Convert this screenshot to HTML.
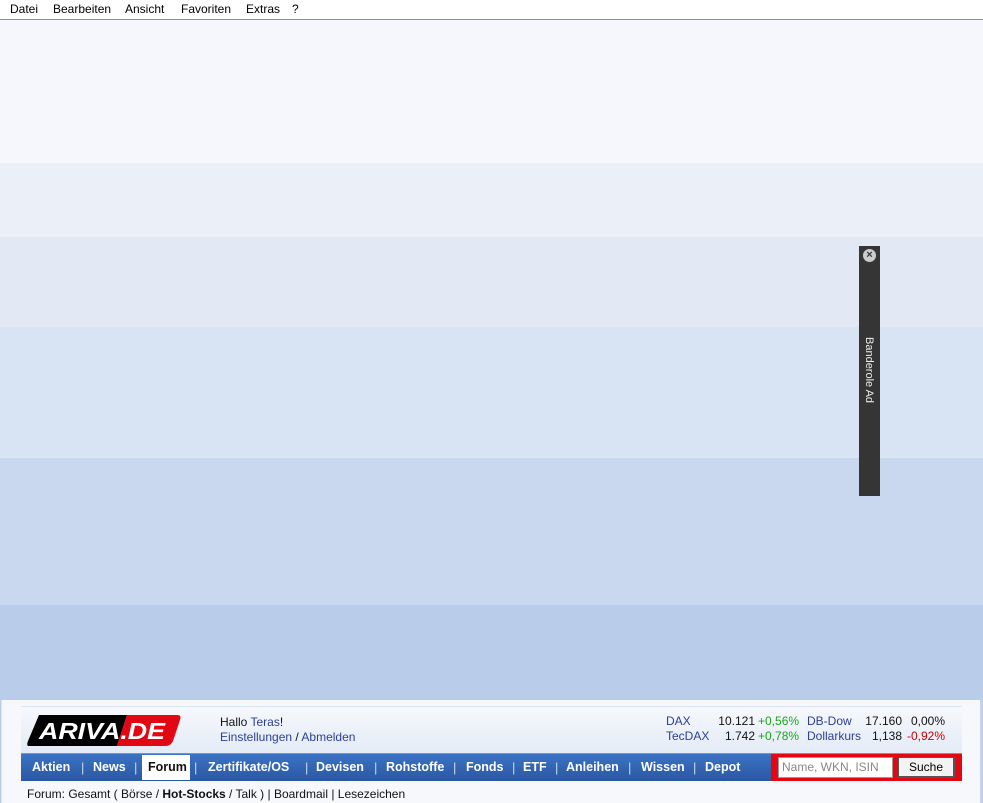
<!DOCTYPE html><html><head><style>
body{margin:0;width:983px;height:803px;overflow:hidden;font-family:"Liberation Sans",sans-serif;background:#f6f8fc;position:relative}
.menu{height:19px;border-bottom:1px solid #8a8f99;background:#fff;font-size:12px;line-height:18px;position:relative}
.menu span{position:absolute;top:0;color:#000}
.b{position:absolute;left:0;width:983px}
.ad{position:absolute;left:859px;top:246px;width:21px;height:250px;background:#353535}
.ad .x{position:absolute;left:4px;top:3px;width:13px;height:13px;border-radius:50%;background:#ccc;color:#353535;font-size:11px;line-height:13px;text-align:center;font-weight:bold}
.ad .t{position:absolute;left:16px;top:91px;transform:rotate(90deg);transform-origin:0 0;color:#eee;font-size:11px;white-space:nowrap}
.cont{position:absolute;left:1px;top:700px;width:978px;height:103px;background:#f6f8fc;border-left:1px solid #dde6f3;border-right:2px solid #c6d5ec}
.hdr{position:absolute;left:19px;top:6px;width:941px;height:47px;border-top:1px solid #dbe4f2;background:linear-gradient(#f6f8fc,#e3ebf6)}
.nav{position:absolute;left:19px;top:53px;width:941px;height:27px;background:linear-gradient(#3b73c4,#2b58a3);border-top:1px solid #6c95d3}
.nav a{position:absolute;top:0;color:#fff;font-weight:bold;font-size:12.5px;line-height:27px}
.sep{position:absolute;top:0;color:#c9d7ee;font-size:13px;line-height:27px}
a{text-decoration:none}
.tk{position:absolute;font-size:12px;line-height:15px;white-space:nowrap}
.r{text-align:right}
</style></head><body>
<div class="menu"><span style="left:10px">Datei</span><span style="left:53px">Bearbeiten</span><span style="left:125px">Ansicht</span><span style="left:181px">Favoriten</span><span style="left:246px">Extras</span><span style="left:292px">?</span></div>
<div class="b" style="top:20px;height:143px;background:#f5f7fc"></div>
<div class="b" style="top:163px;height:74px;background:#ebf0f8"></div>
<div class="b" style="top:237px;height:90px;background:#e2e9f5"></div>
<div class="b" style="top:327px;height:131px;background:#d8e3f4"></div>
<div class="b" style="top:458px;height:147px;background:#c9d8ef"></div>
<div class="b" style="top:605px;height:198px;background:#b9cdea"></div>
<div class="ad"><div class="x">×</div><div class="t">Banderole Ad</div></div>
<div class="cont">
<div class="hdr">
<svg style="position:absolute;left:6px;top:8px" width="154" height="31"><path d="M12 0H100L90 31H2Q-1 31 1 26Z" fill="#000"/><path d="M100 0H150Q155 0 153 5L146 26Q144 31 138 31H90Z" fill="#e30613"/><text x="12" y="24" font-family="Liberation Sans" font-style="italic" font-weight="bold" font-size="23" fill="#fff" textLength="126" lengthAdjust="spacingAndGlyphs">ARIVA.DE</text></svg>
<div style="position:absolute;left:199px;top:8px;font-size:12px;line-height:15px;color:#111">Hallo <span style="color:#2a3f99">Teras</span>!<br><span style="color:#2a3f99">Einstellungen</span> / <span style="color:#2a3f99">Abmelden</span></div>
</div>
<div class="tk" style="left:664px;top:14px;color:#2a3f99">DAX<br>TecDAX</div>
<div class="tk r" style="left:700px;top:14px;width:53px;color:#111">10.121<br>1.742</div>
<div class="tk" style="left:756px;top:14px;color:#1aa51a">+0,56%<br>+0,78%</div>
<div class="tk" style="left:805px;top:14px;color:#2a3f99">DB-Dow<br>Dollarkurs</div>
<div class="tk r" style="left:850px;top:14px;width:50px;color:#111">17.160<br>1,138</div>
<div class="tk r" style="left:900px;top:14px;width:43px;color:#111">0,00%<br><span style="color:#c00">-0,92%</span></div>
<div class="nav">
<a style="left:11px">Aktien</a><span class="sep" style="left:60px">|</span>
<a style="left:72px">News</a><span class="sep" style="left:113px">|</span>
<div style="position:absolute;left:121px;top:1px;width:48px;height:25px;background:#fff"></div><a style="left:127px;color:#111">Forum</a><span class="sep" style="left:173px">|</span>
<a style="left:187px">Zertifikate/OS</a><span class="sep" style="left:284px">|</span>
<a style="left:295px">Devisen</a><span class="sep" style="left:353px">|</span>
<a style="left:365px">Rohstoffe</a><span class="sep" style="left:432px">|</span>
<a style="left:445px">Fonds</a><span class="sep" style="left:491px">|</span>
<a style="left:502px">ETF</a><span class="sep" style="left:534px">|</span>
<a style="left:545px">Anleihen</a><span class="sep" style="left:607px">|</span>
<a style="left:620px">Wissen</a><span class="sep" style="left:672px">|</span>
<a style="left:684px">Depot</a>
<div style="position:absolute;left:750px;top:0;width:191px;height:27px;background:#e30613">
<div style="position:absolute;left:7px;top:3px;width:115px;height:21px;background:#fff;border:1px solid #999;box-sizing:border-box;color:#888;font-size:12px;line-height:19px;padding-left:3px">Name, WKN, ISIN</div>
<div style="position:absolute;left:127px;top:3px;width:57px;height:21px;background:#f3f3f3;border:1px solid #555;border-right-width:2px;border-bottom-width:2px;box-sizing:border-box;font-size:12px;line-height:18px;text-align:center;color:#000">Suche</div>
</div>
</div>
<div style="position:absolute;left:25px;top:87px;font-size:12px;color:#111">Forum: Gesamt ( Börse / <b>Hot-Stocks</b> / Talk ) | Boardmail | Lesezeichen</div>
</div>
</body></html>
